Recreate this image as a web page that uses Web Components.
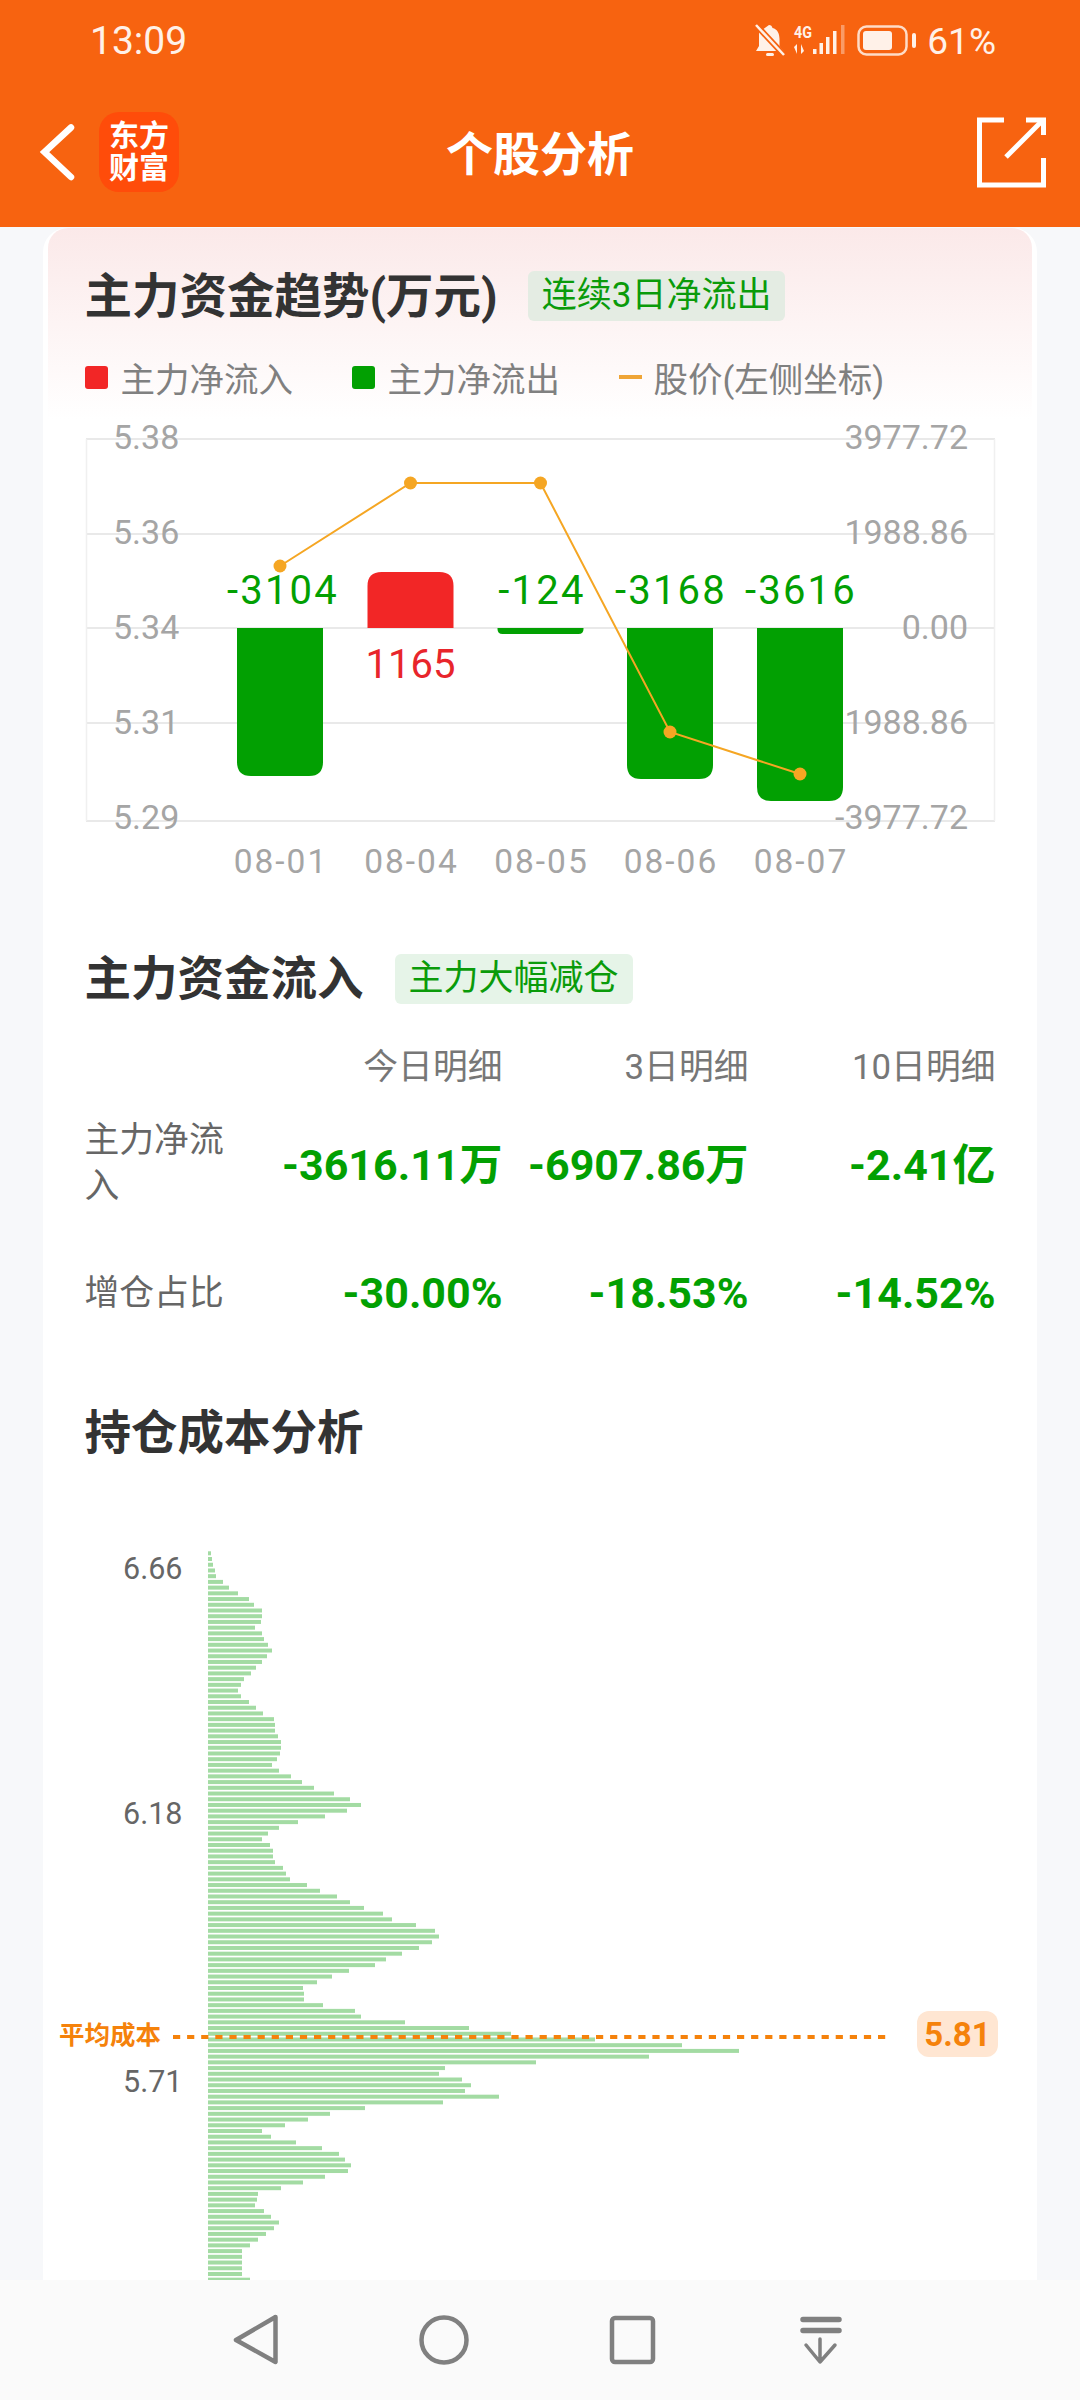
<!DOCTYPE html>
<html lang="zh"><head><meta charset="utf-8"><title>个股分析</title>
<style>
html,body{margin:0;padding:0;background:#f7f8fa;}
body{font-family:Roboto,"Noto Sans CJK SC",sans-serif;width:1080px;height:2400px;overflow:hidden;}
</style></head>
<body>
<app-shell>
  <status-bar slot="top" time="13:09" battery="61%"></status-bar>
  <nav-bar slot="top" title-text="个股分析"></nav-bar>
  <analysis-card>
    <trend-hero></trend-hero>
    <trend-chart></trend-chart>
    <section-title tag="主力大幅减仓" style="margin-top:51px">主力资金流入</section-title>
    <flow-table></flow-table>
    <section-title style="margin-top:89px">持仓成本分析</section-title>
    <cost-chart></cost-chart>
  </analysis-card>
  <bottom-nav slot="bottom"></bottom-nav>
</app-shell>
<script>
const FONT='Roboto,"Noto Sans CJK SC",sans-serif';
function def(name,html,init){
  customElements.define(name,class extends HTMLElement{
    constructor(){super();const r=this.attachShadow({mode:'open'});r.innerHTML=typeof html==='function'?html(this):html;}
    connectedCallback(){
      if(typeof html==='function')this.shadowRoot.innerHTML=html(this);
      if(init)init(this);
    }
  });
}
def('app-shell',`<style>
:host{display:flex;flex-direction:column;width:1080px;height:2400px;background:#f7f8fa;font-family:${FONT};}
.top{flex:none;background:#f76310;display:block}
.main{flex:1;min-height:0;overflow:hidden;}
.bottom{flex:none;display:block}
</style><div class="top"><slot name="top"></slot></div><div class="main"><slot></slot></div><div class="bottom"><slot name="bottom"></slot></div>`);

def('status-bar',h=>`<style>
:host{display:flex;align-items:center;justify-content:space-between;height:82px;padding:0 84px 0 90px;color:#fff1e8;box-sizing:border-box;}
.t{font-size:39px;line-height:82px;}
.r{display:flex;align-items:center;height:82px;}
.p{font-size:37px;margin-left:11px;}
svg{display:block}
</style><span class="t">${h.getAttribute('time')||''}</span><div class="r">
<svg width="161" height="40" viewBox="756 20 161 40">
 <g fill="#fff1e8">
 <path d="M770 24c2 0 3 1 3.500 3 5 1 7 6 7 11v7l4 5H757l3-5v-14z"/>
 <rect x="767" y="52" width="8" height="3" rx="1.500"/>
 <path d="M757 24l28 30" stroke="#f76310" stroke-width="6"/>
 <path d="M757 24l28 30" stroke="#fff1e8" stroke-width="2.500"/>
 <text x="795" y="37" font-size="17" font-weight="700" font-family="Roboto" textLength="18" lengthAdjust="spacingAndGlyphs">4G</text>
 <path d="M798 53v-10l-3 3zM802 43v10l3-3z"/>
 <rect x="814" y="48" width="3.500" height="5"/><rect x="820.500" y="42" width="3.500" height="11"/><rect x="827" y="36" width="3.500" height="17"/><rect x="834" y="30" width="3.500" height="23"/>
 <rect x="842" y="24" width="3.500" height="29" opacity=".4"/>
 <rect x="859.500" y="25.500" width="48" height="28" rx="8" fill="none" stroke="#fff1e8" stroke-width="2.500" opacity=".85"/>
 <rect x="864" y="30" width="29" height="19" rx="3"/>
 <rect x="913" y="32" width="4" height="15" rx="2"/>
 </g></svg>
<span class="p">${h.getAttribute('battery')||''}</span></div>`);

def('nav-bar',h=>`<style>
:host{display:grid;grid-template-columns:1fr auto 1fr;align-items:center;height:145px;padding:0 33px 0 36px;box-sizing:border-box;color:#fff;}
.l{display:flex;align-items:center;gap:22px;margin-top:-5px}
.logo{width:80px;height:80px;border-radius:20px;background:#ff4c0a;color:#fff;font-size:30px;font-weight:700;line-height:32px;text-align:center;display:flex;align-items:center;justify-content:center;letter-spacing:0;}
h1{margin:0 3px 0 0;font-size:47px;font-weight:700;line-height:60px;}
.s{justify-self:end;margin-top:-5px;display:block}
svg{display:block}
</style>
<div class="l"><svg width="41" height="66" viewBox="0 0 41 66"><path d="M35 8.500L8.500 33L35 58" fill="none" stroke="#fff" stroke-width="6.500" stroke-linecap="round"/></svg>
<div class="logo"><span>东方<br>财富</span></div></div>
<h1>${h.getAttribute('title-text')||''}</h1>
<svg class="s" width="72" height="74" viewBox="0 0 72 74"><g fill="none" stroke="#fff" stroke-width="5"><path d="M29 5H4.500V70H68.500V43"/><path d="M31 42L67 6"/><path d="M51 5H68.500V20"/></g></svg>`);

def('analysis-card',`<style>
:host{display:block;margin:1px 43px 0;background:#fff;border-radius:24px 24px 0 0;padding-bottom:20px;}
</style><slot></slot>`);

const tagCss=`.tag{display:inline-block;height:50px;line-height:50px;padding:0 14px;border-radius:6px;font-size:35px;color:#0a9b0a;background:#e6f4e8;font-weight:400;white-space:nowrap;}`;
def('trend-hero',`<style>
:host{display:block;margin:0 5px;padding:41px 0 21px 36.500px;border-radius:20px 20px 0 0;background:linear-gradient(#fbe9e9,#fff);}
.row{display:flex;align-items:center;height:56px;gap:30px}
h2{margin:0;font-size:47.500px;font-weight:700;color:#333;line-height:56px;white-space:nowrap}
${tagCss}
.tag{background:#e4ece3;margin-top:-2px}
.leg{display:flex;align-items:center;height:44px;margin-top:30px;font-size:34.500px;color:#808080;}
.i{display:flex;align-items:center;}
.sq{width:23px;height:23px;border-radius:3px;margin:0 13px 0 0}
.da{width:23px;height:4px;margin:0 12px 0 0;background:#efa536}
</style>
<div class="row"><h2>主力资金趋势(万元)</h2><span class="tag">连续3日净流出</span></div>
<div class="leg"><span class="i" style="width:267px"><span class="sq" style="background:#f22626"></span>主力净流入</span>
<span class="i" style="width:267px"><span class="sq" style="background:#02a002"></span>主力净流出</span>
<span class="i"><span class="da"></span>股价(左侧坐标)</span></div>`);

def('trend-chart',()=>{
 const g=[439,534,628,723,821];
 const L=['5.38','5.36','5.34','5.31','5.29'],R=['3977.72','1988.86','0.00','1988.86','-3977.72'],LY=[437,532,627,722,817];
 const X=[280,410.5,540.5,670,800],D=['08-01','08-04','08-05','08-06','08-07'];
 const P=[566,483,483,732,774];
 const hw=43;
 const down=(x,b,r)=>`<path fill="#02a002" d="M${x-hw} 628H${x+hw}V${b-r}Q${x+hw} ${b} ${x+hw-r} ${b}H${x-hw+r}Q${x-hw} ${b} ${x-hw} ${b-r}Z"/>`;
 let s='';
 g.forEach(y=>s+=`<line x1="86" x2="995" y1="${y}" y2="${y}" stroke="#e9e9e9" stroke-width="2"/>`);
 s+=`<line x1="86.500" x2="86.500" y1="439" y2="821" stroke="#f0f0f0" stroke-width="1.500"/><line x1="994.500" x2="994.500" y1="439" y2="821" stroke="#f0f0f0" stroke-width="1.500"/>`;
 s+=down(X[0],776,14)+down(X[2],634,5)+down(X[3],779,14)+down(X[4],801,14);
 s+=`<path fill="#f22626" d="M${X[1]-hw} 628V586Q${X[1]-hw} 572 ${X[1]-hw+14} 572H${X[1]+hw-14}Q${X[1]+hw} 572 ${X[1]+hw} 586V628Z"/>`;
 s+=`<polyline fill="none" stroke="#f5a623" stroke-width="2" points="${X.map((x,i)=>x+','+P[i]).join(' ')}"/>`;
 X.forEach((x,i)=>s+=`<circle cx="${x}" cy="${P[i]}" r="6.500" fill="#f5a623"/>`);
 L.forEach((t,i)=>s+=`<text x="113" y="${LY[i]+12}" font-size="34" fill="#a5a5a5">${t}</text>`);
 R.forEach((t,i)=>s+=`<text x="968" y="${LY[i]+12}" font-size="34" fill="#a5a5a5" text-anchor="end">${t}</text>`);
 D.forEach((t,i)=>s+=`<text x="${X[i]+1}" y="873" font-size="33.500" fill="#a5a5a5" text-anchor="middle" letter-spacing="2">${t}</text>`);
 [['-3104',0,3],['-124',2,1.5],['-3168',3,1],['-3616',4,1]].forEach(([t,i,d])=>s+=`<text x="${X[i]+d}" y="604" font-size="40" fill="#02a002" text-anchor="middle" letter-spacing="2.200">${t}</text>`);
 s+=`<text x="${X[1]}" y="678" font-size="40" fill="#e8252b" text-anchor="middle">1165</text>`;
 return `<style>:host{display:block;height:480px;margin-top:0}svg{display:block;font-family:${FONT}}</style><svg width="994" height="480" viewBox="43 420 994 480">${s}</svg>`;
});

def('section-title',h=>`<style>
:host{display:flex;align-items:center;height:56px;padding-left:41.500px;gap:31px;}
h2{margin:0;font-size:46.500px;font-weight:700;color:#333;line-height:56px;white-space:nowrap}
${tagCss}
.tag{margin-top:-1px}
</style><h2><slot></slot></h2>${h.getAttribute('tag')?`<span class="tag">${h.getAttribute('tag')}</span>`:''}`);

def('flow-table',()=>{
 const rows=[['主力净流入','-3616.11万','-6907.86万','-2.41亿'],['增仓占比','-30.00%','-18.53%','-14.52%']];
 return `<style>
:host{display:grid;grid-template-columns:171px 247px 246px 247px;margin:37px 39.500px 0 41.500px;align-items:center;}
div{text-align:right;white-space:nowrap}
.h{font-size:34.800px;line-height:46px;color:#777;margin-bottom:26.500px}
.l{text-align:left;font-size:34.800px;line-height:46px;color:#666;white-space:normal;width:140px}
.v{font-size:43px;font-weight:700;color:#02a002;line-height:46px;padding-top:4px}
.g{margin-top:61.500px}
.v.g{padding-top:0}
</style><div class="h"></div><div class="h">今日明细</div><div class="h">3日明细</div><div class="h">10日明细</div>
${rows.map((r,i)=>`<div class="l ${i?'g':''}">${r[0]}</div>`+r.slice(1).map(v=>`<div class="v ${i?'g':''}">${v}</div>`).join('')).join('')}`;
});

def('cost-chart',()=>{
 const w=[3,4,5,7,8,15,21,30,41,46,54,54,53,47,54,56,60,64,59,54,48,43,36,33,30,33,41,48,55,66,67,67,70,73,73,72,69,64,71,83,94,106,126,142,153,139,117,90,71,
 60,54,62,65,65,67,75,78,82,99,112,129,142,156,175,184,208,227,231,224,211,194,178,167,141,124,
 109,95,96,96,115,147,153,197,261,303,387,474,531,441,328,237,231,254,263,257,291,235,157,122,100,77,54,63,88,114,131,137,143,140,117,95,73,50,49,47,56,63,71,66,58,50,42,34,34,34,34,34,42];
 const step=(2278.700-1552.300)/(w.length-1);
 let s='';
 w.forEach((v,i)=>{const y=1552.300+i*step;s+=`<rect x="208" y="${(y-2).toFixed(2)}" width="${v}" height="4" fill="#a3dba3"/>`;});
 [['6.66',1567],['6.18',1812],['5.71',2080]].forEach(([t,y])=>s+=`<text x="123" y="${y+11}" font-size="30.500" fill="#666">${t}</text>`);
 s+=`<line x1="173" x2="890" y1="2036" y2="2036" stroke="#f5820b" stroke-width="4" stroke-dasharray="7.200 6.900"/>`;
 s+=`<text x="59" y="2043" font-size="25.500" font-weight="700" fill="#f5820b">平均成本</text>`;
 s+=`<rect x="917" y="2010" width="81" height="46" rx="12" fill="#ffe6d2"/>`;
 s+=`<text x="957.500" y="2045" font-size="33" font-weight="700" fill="#f5820b" text-anchor="middle">5.81</text>`;
 return `<style>:host{display:block;height:800px;margin-top:39.500px}svg{display:block;font-family:${FONT}}</style><svg width="994" height="800" viewBox="43 1500 994 800">${s}</svg>`;
});

def('bottom-nav',`<style>
:host{display:block;height:120px;background:#fafafa;position:relative;z-index:1}
svg{display:block}
</style><svg width="1080" height="120" viewBox="0 2280 1080 120"><g fill="none" stroke="#808080" stroke-width="4.500" stroke-linejoin="round" stroke-linecap="round">
<path d="M275.500 2317L236 2340L275.500 2362Z"/>
<circle cx="444" cy="2340" r="22.500"/>
<rect x="612" y="2318" width="41" height="44" rx="3"/>
<path d="M803 2319.500H839M803 2330.500H839" stroke-width="5.500"/>
<path d="M820 2339V2361M806 2345L820 2362L835 2345" stroke-width="3.500"/>
</g></svg>`);
</script>
</body></html>
